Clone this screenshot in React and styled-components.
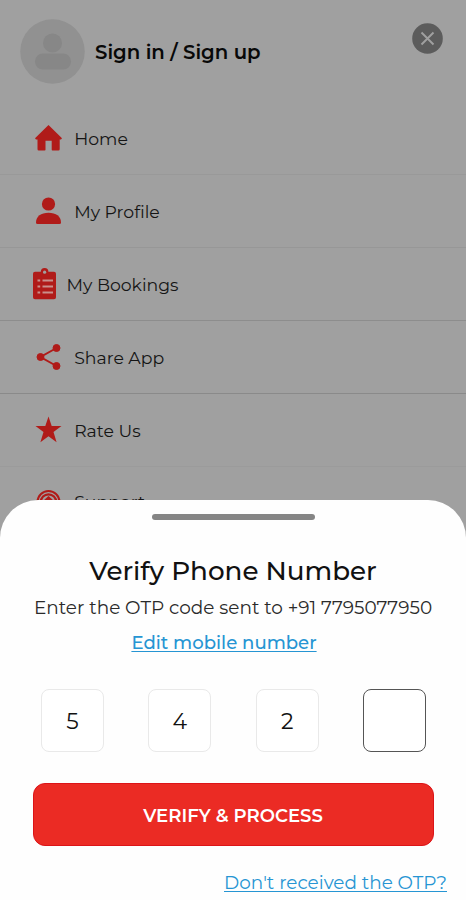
import React, { useState } from "react";

import styled, { createGlobalStyle } from "styled-components";

const GlobalStyle = createGlobalStyle`
  * {
    box-sizing: border-box;
  }
  body {
    margin: 0;
    font-family: Montserrat, Inter, sans-serif;
    color: #111;
  }
`;

const Screen = styled.div`
  position: relative;
  height: 900px;
  overflow: hidden;
  background: #a0a0a0;
`;

const Header = styled.header`
  display: flex;
  align-items: center;
  height: 102px;
  padding: 0 23px 0 20px;
`;

const Avatar = styled.svg`
  width: 65px;
  height: 65px;
  flex: none;
`;

const SignIn = styled.div`
  flex: 1;
  margin: 2px 0 0 10px;
  font-size: 19.7px;
  font-weight: 600;
  white-space: nowrap;
  color: #080808;
`;

const CloseButton = styled.button`
  width: 31px;
  height: 31px;
  padding: 0;
  border: 0;
  margin-bottom: 26px;
  background: none;
  > svg {
    display: block;
  }
`;

const MenuItem = styled.div`
  display: flex;
  align-items: center;
  height: ${(props) => props.$height || 73}px;
  padding-left: ${(props) => (props.$wide ? 32 : 34)}px;
  border-bottom: 1px solid ${(props) => props.$line};
  > svg {
    flex: none;
    margin-right: ${(props) => (props.$wide ? 8.5 : 11.2)}px;
  }
`;

const MenuLabel = styled.span`
  font-size: 17.3px;
  color: #151515;
`;

const Sheet = styled.section`
  position: absolute;
  left: 0;
  right: 0;
  bottom: 0;
  height: 400px;
  display: flex;
  flex-direction: column;
  align-items: center;
  border-radius: 38px 38px 0 0;
  background: #fefefe;
`;

const Handle = styled.div`
  width: 163px;
  height: 6px;
  margin-top: 14px;
  border-radius: 3px;
  background: #858585;
`;

const Title = styled.h1`
  margin: 34px 0 0;
  font-size: 26.2px;
  line-height: 34px;
  font-weight: 500;
  white-space: nowrap;
`;

const Message = styled.p`
  margin: 8px 0 0;
  font-size: 18.45px;
  line-height: 24px;
  white-space: nowrap;
  color: #2a2a2a;
`;

const Link = styled.a`
  font-size: 18.4px;
  line-height: 24px;
  white-space: nowrap;
  color: #2695d3;
  text-decoration: underline;
  text-decoration-thickness: 1px;
  text-underline-offset: 2px;
`;

const EditLink = styled(Link)`
  margin: 11px 18px 0 0;
  font-size: 18.1px;
  font-weight: 500;
`;

const ResendLink = styled(Link)`
  align-self: flex-end;
  margin: 25px 19px 0 0;
`;

const Code = styled.div`
  display: flex;
  justify-content: space-between;
  width: 385px;
  margin: 34px 0 0 1px;
`;

const Digit = styled.input`
  width: 63px;
  height: 63px;
  padding: 2px 0 0;
  border: 1px solid ${(props) => (props.$active ? "#555" : "#e9e9e9")};
  border-radius: 8px;
  outline: none;
  background: #fff;
  font-family: inherit;
  font-size: 22px;
  text-align: center;
  color: #111;
`;

const VerifyButton = styled.button`
  width: 401px;
  height: 63px;
  padding-top: 2px;
  margin-top: 31px;
  border: 1px solid #dc1418;
  border-radius: 12px;
  background: #eb2b24;
  font-family: inherit;
  font-size: 18.1px;
  font-weight: 600;
  color: #fff;
`;

const RED = "#b01b19";
const BG = "#a0a0a0";

const HomeIcon = () => (
  <svg width="29" height="30" viewBox="0 0 29 30" fill={RED}>
    <path d="M14.5 2 28 15.2l-1 1.3h-1.3v9.7q0 1.3-1.3 1.3h-5.9q-.8 0-.8-.8v-9h-6.2v9q0 .8-.8.8H4.8q-1.3 0-1.3-1.3v-9.7H2L1 15.2Z" />
  </svg>
);

const ProfileIcon = () => (
  <svg width="29" height="30" viewBox="0 0 29 30" fill={RED}>
    <circle cx="14.5" cy="8" r="6.6" />
    <path d="M2 26.5c0-6 5-9.7 12.5-9.7S27 20.5 27 26.5q0 1.5-1.5 1.5h-22Q2 28 2 26.5Z" />
  </svg>
);

const BookingsIcon = () => (
  <svg width="26" height="34" viewBox="0 0 26 34">
    <path fill={RED} d="M3 4.8h5.800a3.8 3.8 0 0 1 7.6 0H22q2 0 2 2v23.4q0 2-2 2H3q-2 0-2-2V6.8q0-2 2-2Z" />
    <circle cx="12.6" cy="5.2" r="1.6" fill={BG} />
    <path stroke="#c9908c" strokeWidth="2.2" d="M5.500 13.500h2.700M10.500 13.500H21M5.500 19.500h2.700M10.500 19.500H21M5.500 25.500h2.700M10.500 25.500H21" />
  </svg>
);

const ShareIcon = () => (
  <svg width="29" height="30" viewBox="0 0 29 30" fill={RED} stroke={RED}>
    <path d="M22.5 6 6.5 15l16 9" fill="none" strokeWidth="2" />
    <circle cx="22.5" cy="6" r="3.5" />
    <circle cx="6.5" cy="15" r="3.5" />
    <circle cx="22.5" cy="24" r="3.5" />
  </svg>
);

const StarIcon = () => (
  <svg width="29" height="30" viewBox="0 0 29 30" fill={RED}>
    <path d="m14.5 1.5 3.200 9.600h9.800l-8 6 3.100 10.200-8.100-6-8.100 6 3.100-10.200-8-6h9.800Z" />
  </svg>
);

const SupportIcon = () => (
  <svg width="29" height="30" viewBox="0 0 29 30" fill="none" stroke={RED}>
    <circle cx="14.5" cy="16" r="11" strokeWidth="2" />
    <circle cx="14.5" cy="16" r="7.7" strokeWidth="2.2" />
    <path d="m9 15 5.5-5 5.5 5-3 3h-5Z" fill={RED} stroke="none" />
  </svg>
);

const menu = [
  { label: "Home", icon: HomeIcon, line: "#999" },
  { label: "My Profile", icon: ProfileIcon, line: "#979797" },
  { label: "My Bookings", icon: BookingsIcon, line: "#8d8d8d", wide: true },
  { label: "Share App", icon: ShareIcon, line: "#8a8a8a" },
  { label: "Rate Us", icon: StarIcon, line: "#9b9b9b" },
  { label: "Support", icon: SupportIcon, line: "#9b9b9b", height: 69 },
];

const App = () => {
  const [code, setCode] = useState(["5", "4", "2", ""]);

  const digitChange = (e, index) => {
    setCode(code.map((digit, i) => (i === index ? e.target.value : digit)));
  };

  return (
    <Screen>
      <GlobalStyle />
      <Header>
        <Avatar viewBox="0 0 65 65">
          <circle cx="32.5" cy="32.5" r="32.3" fill="#919191" />
          <circle cx="32.5" cy="24" r="9.5" fill="#878787" />
          <rect x="15" y="34.5" width="36" height="16" rx="8" fill="#878787" />
        </Avatar>
        <SignIn>Sign in / Sign up</SignIn>
        <CloseButton aria-label="Close">
          <svg width="31" height="31" viewBox="0 0 31 31">
            <circle cx="15.5" cy="15.5" r="15.3" fill="#5c5c5c" />
            <path d="m9.5 9.5 12 12M21.5 9.5l-12 12" stroke="#a0a0a0" strokeWidth="1.9" />
          </svg>
        </CloseButton>
      </Header>
      {menu.map(({ label, icon: Icon, line, wide, height }) => (
        <MenuItem key={label} $line={line} $wide={wide} $height={height}>
          <Icon />
          <MenuLabel>{label}</MenuLabel>
        </MenuItem>
      ))}
      <Sheet>
        <Handle />
        <Title>Verify Phone Number</Title>
        <Message>Enter the OTP code sent to +91 7795077950</Message>
        <EditLink>Edit mobile number</EditLink>
        <Code>
          {code.map((digit, index) => (
            <Digit
              key={index}
              value={digit}
              maxLength={1}
              $active={digit === ""}
              onChange={(e) => digitChange(e, index)}
            />
          ))}
        </Code>
        <VerifyButton>VERIFY &amp; PROCESS</VerifyButton>
        <ResendLink>Don't received the OTP?</ResendLink>
      </Sheet>
    </Screen>
  );
};

export default App;
